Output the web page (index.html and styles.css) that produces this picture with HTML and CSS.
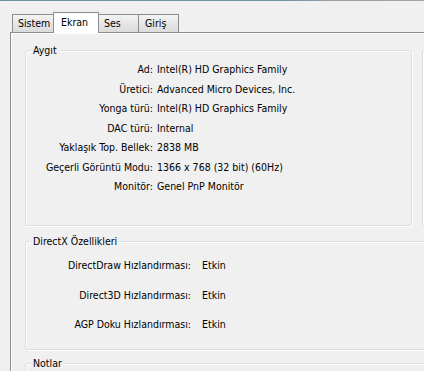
FILE: index.html
```html
<!DOCTYPE html>
<html lang="tr">
<head>
    <meta charset="UTF-8">
    <meta name="viewport" content="width=device-width, initial-scale=1.0">
    <title>DirectX Tanı Aracı - Ekran</title>
    <link rel="stylesheet" href="styles.css">
</head>
<body>

<div class="window">
    <div class="tabs">
        <div class="tab tab-sistem">Sistem</div>
        <div class="tab tab-ekran active">Ekran</div>
        <div class="tab tab-ses">Ses</div>
        <div class="tab tab-giris">Giriş</div>
    </div>

    <div class="page">
        <div class="top-row">
            <div class="group device">
                <div class="group-title">Aygıt</div>
                <div class="info">
                    <span class="label">Ad:</span><span>Intel(R) HD Graphics Family</span>
                    <span class="label">Üretici:</span><span>Advanced Micro Devices, Inc.</span>
                    <span class="label">Yonga türü:</span><span>Intel(R) HD Graphics Family</span>
                    <span class="label">DAC türü:</span><span>Internal</span>
                    <span class="label">Yaklaşık Top. Bellek:</span><span>2838 MB</span>
                    <span class="label">Geçerli Görüntü Modu:</span><span>1366 x 768 (32 bit) (60Hz)</span>
                    <span class="label">Monitör:</span><span>Genel PnP Monitör</span>
                </div>
            </div>
            <div class="group drivers"></div>
        </div>

        <div class="group features">
            <div class="group-title">DirectX Özellikleri</div>
            <div class="info features-info">
                <span class="label">DirectDraw Hızlandırması:</span><span>Etkin</span>
                <span class="label">Direct3D Hızlandırması:</span><span>Etkin</span>
                <span class="label">AGP Doku Hızlandırması:</span><span>Etkin</span>
            </div>
        </div>

        <div class="group notes">
            <div class="group-title">Notlar</div>
        </div>
    </div>
</div>

</body>
</html>
```

FILE: styles.css
```css
body {
    margin: 0;
    background-color: #f0f0f0;
    font-family: "DejaVu Sans Condensed", "Liberation Sans", sans-serif;
    font-size: 10.5px;
    color: #000;
    height: 100vh;
    overflow: hidden;
}
.window {
    padding-top: 1px;
    background: linear-gradient(to right, #6b8ea3, #7394a7 290px, #9a9fa3 330px, #a2a5a8) top left / 100% 1px no-repeat;
}
.tabs {
    display: flex;
    align-items: flex-end;
    padding: 11px 0 0 12px;
}
.tab {
    box-sizing: border-box;
    height: 18px;
    margin-left: -1px;
    padding-left: 5px;
    line-height: 17px;
    border: 1px solid #898c95;
    border-bottom: none;
    background: linear-gradient(#f4f4f4, #e6e6e6 50%, #dcdcdc);
}
.tab-sistem {
    width: 42px;
    margin-left: 0;
}
.tab-ekran {
    width: 46px;
}
.tab-ses {
    width: 41px;
}
.tab-giris {
    width: 41px;
    padding-left: 6px;
}
.tab.active {
    height: 21px;
    margin-bottom: -1px;
    padding-left: 7px;
    line-height: 18px;
    background: #fff;
    position: relative;
    z-index: 1;
}
.page {
    box-sizing: border-box;
    margin-left: 10px;
    height: 339px;
    padding: 17px 0 0 14px;
    border-left: 1px solid #898c95;
    border-top: 1px solid #898c95;
    box-shadow: inset 1px 1px 0 #fff;
    overflow: hidden;
}
.top-row {
    display: flex;
    gap: 10px;
}
.group {
    box-sizing: border-box;
    flex-shrink: 0;
    border: 1px solid #d5dfe5;
    border-radius: 3px;
    box-shadow: 1px 1px 0 #fff, inset 1px 1px 0 #fff;
}
.group-title {
    width: fit-content;
    margin: -7px 0 0 5px;
    padding: 0 2px;
    line-height: 13px;
    background-color: #f0f0f0;
}
.device, .drivers {
    width: 387px;
    height: 176px;
}
.info {
    display: grid;
    grid-template-columns: 127px auto;
    column-gap: 4px;
    margin-top: 3px;
    line-height: 19.5px;
    white-space: nowrap;
}
.label {
    text-align: right;
}
.features {
    width: 600px;
    height: 109px;
    margin-top: 15px;
}
.features-info {
    grid-template-columns: 165px auto;
    column-gap: 11px;
    line-height: 29.5px;
}
.notes {
    width: 600px;
    height: 60px;
    margin-top: 13px;
}
```
